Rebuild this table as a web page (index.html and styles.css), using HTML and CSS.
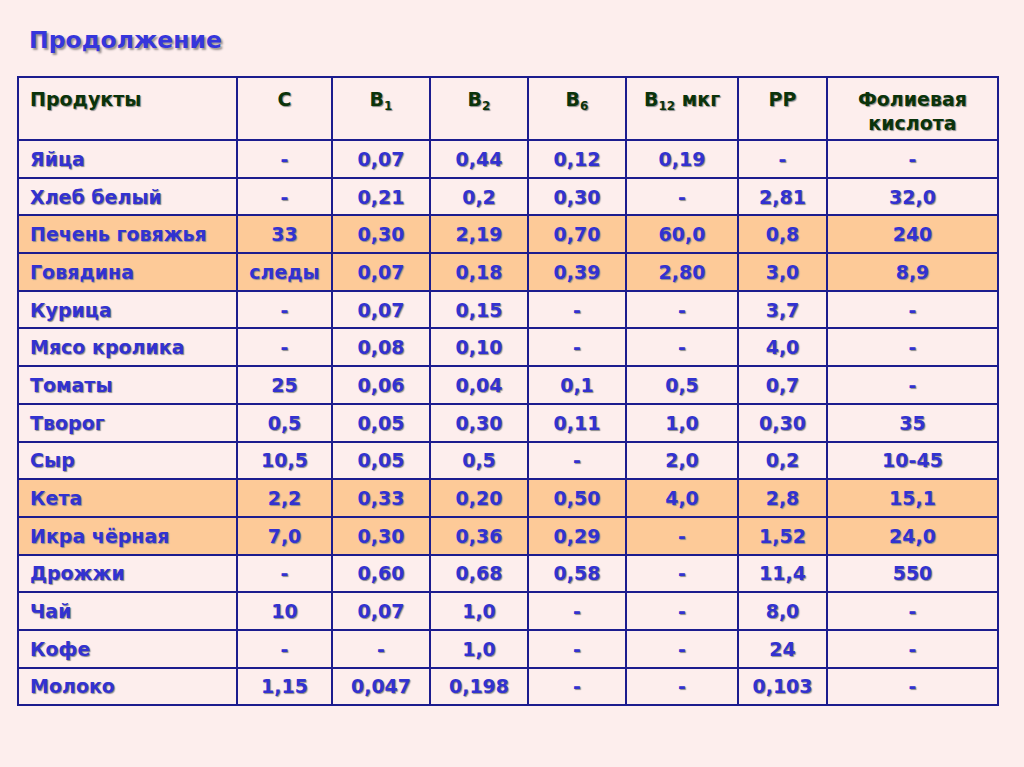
FILE: index.html
```html
<!DOCTYPE html>
<html lang="ru">
<head>
<meta charset="utf-8">
<link rel="stylesheet" href="styles.css">
</head>
<body>
<div class="slide">
  <h1 class="title">Продолжение</h1>
  <table class="vit">
    <colgroup>
      <col class="c-name"><col class="c-c"><col class="c-b"><col class="c-b"><col class="c-b"><col class="c-b12"><col class="c-pp"><col class="c-fol">
    </colgroup>
    <thead>
      <tr>
        <th class="left">Продукты</th>
        <th>С</th>
        <th>В<sub>1</sub></th>
        <th>В<sub>2</sub></th>
        <th>В<sub>6</sub></th>
        <th>В<sub>12</sub> мкг</th>
        <th>РР</th>
        <th>Фолиевая кислота</th>
      </tr>
    </thead>
    <tbody>
      <tr><td class="left">Яйца</td><td>-</td><td>0,07</td><td>0,44</td><td>0,12</td><td>0,19</td><td>-</td><td>-</td></tr>
      <tr><td class="left">Хлеб белый</td><td>-</td><td>0,21</td><td>0,2</td><td>0,30</td><td>-</td><td>2,81</td><td>32,0</td></tr>
      <tr class="hl"><td class="left">Печень говяжья</td><td>33</td><td>0,30</td><td>2,19</td><td>0,70</td><td>60,0</td><td>0,8</td><td>240</td></tr>
      <tr class="hl"><td class="left">Говядина</td><td>следы</td><td>0,07</td><td>0,18</td><td>0,39</td><td>2,80</td><td>3,0</td><td>8,9</td></tr>
      <tr><td class="left">Курица</td><td>-</td><td>0,07</td><td>0,15</td><td>-</td><td>-</td><td>3,7</td><td>-</td></tr>
      <tr><td class="left">Мясо кролика</td><td>-</td><td>0,08</td><td>0,10</td><td>-</td><td>-</td><td>4,0</td><td>-</td></tr>
      <tr><td class="left">Томаты</td><td>25</td><td>0,06</td><td>0,04</td><td>0,1</td><td>0,5</td><td>0,7</td><td>-</td></tr>
      <tr><td class="left">Творог</td><td>0,5</td><td>0,05</td><td>0,30</td><td>0,11</td><td>1,0</td><td>0,30</td><td>35</td></tr>
      <tr><td class="left">Сыр</td><td>10,5</td><td>0,05</td><td>0,5</td><td>-</td><td>2,0</td><td>0,2</td><td>10-45</td></tr>
      <tr class="hl"><td class="left">Кета</td><td>2,2</td><td>0,33</td><td>0,20</td><td>0,50</td><td>4,0</td><td>2,8</td><td>15,1</td></tr>
      <tr class="hl"><td class="left">Икра чёрная</td><td>7,0</td><td>0,30</td><td>0,36</td><td>0,29</td><td>-</td><td>1,52</td><td>24,0</td></tr>
      <tr><td class="left">Дрожжи</td><td>-</td><td>0,60</td><td>0,68</td><td>0,58</td><td>-</td><td>11,4</td><td>550</td></tr>
      <tr><td class="left">Чай</td><td>10</td><td>0,07</td><td>1,0</td><td>-</td><td>-</td><td>8,0</td><td>-</td></tr>
      <tr><td class="left">Кофе</td><td>-</td><td>-</td><td>1,0</td><td>-</td><td>-</td><td>24</td><td>-</td></tr>
      <tr><td class="left">Молоко</td><td>1,15</td><td>0,047</td><td>0,198</td><td>-</td><td>-</td><td>0,103</td><td>-</td></tr>
    </tbody>
  </table>
</div>
</body>
</html>
```
FILE: styles.css
```css
html, body {
  margin: 0;
  padding: 0;
  background: #fdeeed;
}
.slide {
  width: 1024px;
  height: 767px;
  box-sizing: border-box;
  padding: 25px 0 0 17px;
  font-family: "DejaVu Sans", "Liberation Sans", Arial, sans-serif;
  font-weight: bold;
}
.title {
  margin: 0 0 21px 12px;
  font-size: 23.5px;
  line-height: 30px;
  color: #3636dc;
  text-shadow: 2px 2px 2px #9a9090;
}
.vit {
  border-collapse: collapse;
  table-layout: fixed;
  width: 982px;
}
.c-name { width: 219px; }
.c-c { width: 95px; }
.c-b { width: 98px; }
.c-b12 { width: 112px; }
.c-pp { width: 89px; }
.c-fol { width: 171px; }
.vit th, .vit td {
  border: 2px solid #1c1c8e;
  text-align: center;
  font-size: 19px;
  padding: 0 2px;
}
.vit th {
  height: 52px;
  vertical-align: top;
  padding-top: 9px;
  line-height: 24px;
  color: #0a330a;
  text-shadow: 1px 1px 1px #8a8a8a;
}
.vit th sub {
  font-size: 12px;
  vertical-align: -4px;
  line-height: 0;
}
.vit td {
  height: 35.7px;
  line-height: 22px;
  color: #3232d0;
  text-shadow: 1px 1px 1px #8a8a8a;
}
.vit .left {
  text-align: left;
  padding-left: 11px;
}
.vit tr.hl td {
  background: #fdca98;
}
```
